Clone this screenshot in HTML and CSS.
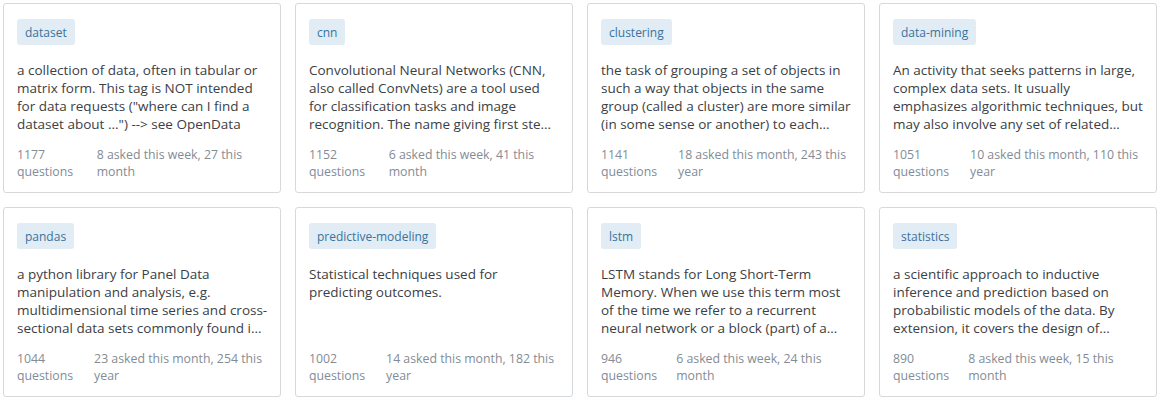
FILE: index.html
```html
<!DOCTYPE html>
<html lang="en">
<head>
<meta charset="utf-8">
<title>Tags</title>
<link rel="stylesheet" href="styles.css">
</head>
<body>
<div class="tag-grid">
  <div class="tag-card">
    <div><a class="tag">dataset</a></div>
    <p class="excerpt">a collection of data, often in tabular or<br>matrix form. This tag is NOT intended<br>for data requests ("where can I find a<br>dataset about ...") --&gt; see OpenData</p>
    <div class="stats"><div class="count">1177 questions</div><div class="recent">8 asked this week, 27 this month</div></div>
  </div>
  <div class="tag-card">
    <div><a class="tag">cnn</a></div>
    <p class="excerpt">Convolutional Neural Networks (CNN,<br>also called ConvNets) are a tool used<br>for classification tasks and image<br>recognition. The name giving first ste…</p>
    <div class="stats"><div class="count">1152 questions</div><div class="recent">6 asked this week, 41 this month</div></div>
  </div>
  <div class="tag-card">
    <div><a class="tag">clustering</a></div>
    <p class="excerpt">the task of grouping a set of objects in<br>such a way that objects in the same<br>group (called a cluster) are more similar<br>(in some sense or another) to each…</p>
    <div class="stats"><div class="count">1141 questions</div><div class="recent">18 asked this month, 243 this year</div></div>
  </div>
  <div class="tag-card">
    <div><a class="tag">data-mining</a></div>
    <p class="excerpt">An activity that seeks patterns in large,<br>complex data sets. It usually<br>emphasizes algorithmic techniques, but<br>may also involve any set of related…</p>
    <div class="stats"><div class="count">1051 questions</div><div class="recent">10 asked this month, 110 this year</div></div>
  </div>
  <div class="tag-card">
    <div><a class="tag">pandas</a></div>
    <p class="excerpt">a python library for Panel Data<br>manipulation and analysis, e.g.<br>multidimensional time series and cross-<br>sectional data sets commonly found i…</p>
    <div class="stats"><div class="count">1044 questions</div><div class="recent">23 asked this month, 254 this year</div></div>
  </div>
  <div class="tag-card">
    <div><a class="tag">predictive-modeling</a></div>
    <p class="excerpt">Statistical techniques used for<br>predicting outcomes.</p>
    <div class="stats"><div class="count">1002 questions</div><div class="recent">14 asked this month, 182 this year</div></div>
  </div>
  <div class="tag-card">
    <div><a class="tag">lstm</a></div>
    <p class="excerpt">LSTM stands for Long Short-Term<br>Memory. When we use this term most<br>of the time we refer to a recurrent<br>neural network or a block (part) of a…</p>
    <div class="stats"><div class="count">946 questions</div><div class="recent">6 asked this week, 24 this month</div></div>
  </div>
  <div class="tag-card">
    <div><a class="tag">statistics</a></div>
    <p class="excerpt">a scientific approach to inductive<br>inference and prediction based on<br>probabilistic models of the data. By<br>extension, it covers the design of…</p>
    <div class="stats"><div class="count">890 questions</div><div class="recent">8 asked this week, 15 this month</div></div>
  </div>
</div>
</body>
</html>
```
FILE: styles.css
```css
html, body {
  margin: 0;
  padding: 0;
  background: #ffffff;
}
body {
  font-family: "Open Sans", "Noto Sans", "Liberation Sans", sans-serif;
  color: #3b4045;
}
.tag-grid {
  display: grid;
  grid-template-columns: repeat(4, 1fr);
  gap: 14px;
  padding: 3px;
}
.tag-card {
  display: flex;
  flex-direction: column;
  border: 1px solid #d6d9dc;
  border-radius: 3px;
  padding: 15px 13px 12px 13px;
  min-width: 0;
}
.tag {
  display: inline-block;
  height: 26px;
  line-height: 24px;
  padding: 2px 8px 0 8px;
  box-sizing: border-box;
  font-size: 12px;
  color: #39739d;
  background: #e1ecf4;
  border-radius: 3px;
  text-decoration: none;
}
.excerpt {
  margin: 16px 0 13px 0;
  font-size: 13.5px;
  line-height: 18px;
  color: #3b4045;
  white-space: nowrap;
}
.stats {
  margin-top: auto;
  display: flex;
  justify-content: space-between;
  font-size: 12.3px;
  line-height: 17px;
  color: #838c95;
}
.count, .recent {
  flex: 0 1 auto;
}
.recent {
  flex-grow: 1;
}
```
